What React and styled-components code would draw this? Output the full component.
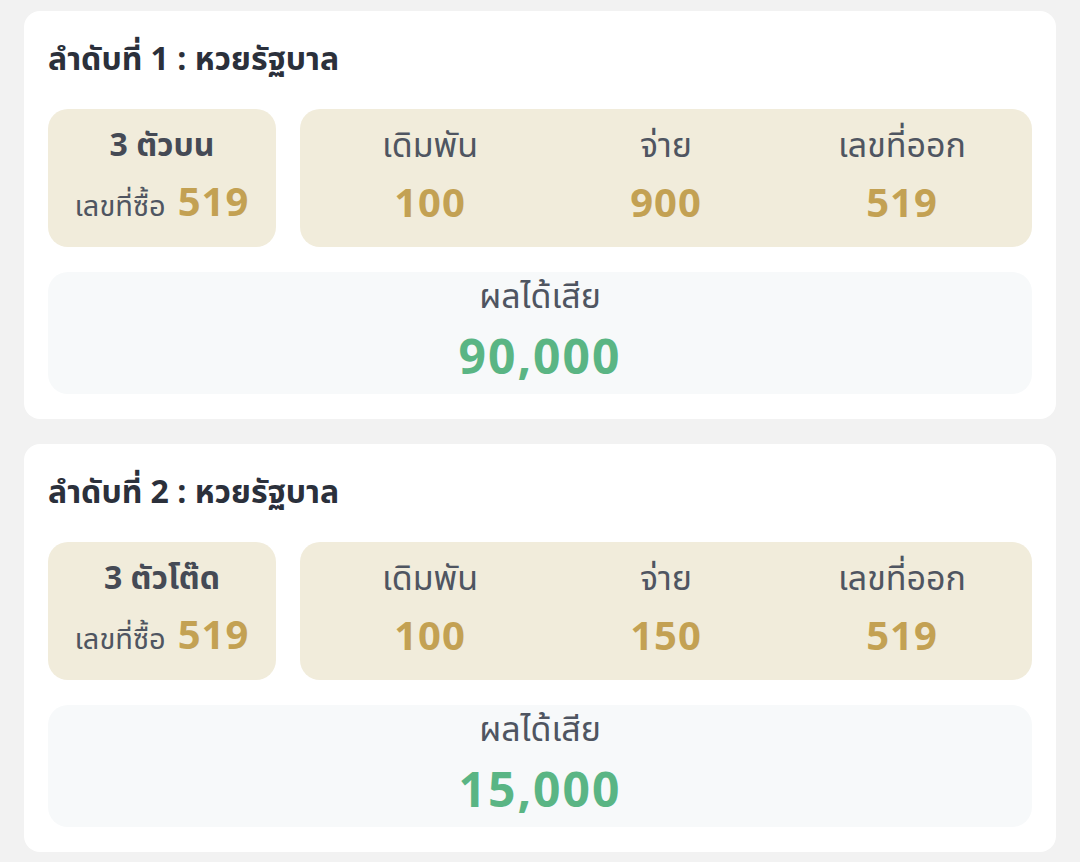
import React from 'react';
import styled, { createGlobalStyle } from 'styled-components';

const GlobalStyle = createGlobalStyle`
  body {
    margin: 0;
    background: #f2f2f2;
    font-family: "Noto Sans Thai", "Noto Sans", "Liberation Sans", sans-serif;
  }
`;

const Page = styled.div`
  display: flex;
  flex-direction: column;
  gap: 25px;
  padding: 11px 24px;
`;

const Card = styled.div`
  background: #ffffff;
  border-radius: 16px;
  padding: 24px 24px 25px;
  display: flex;
  flex-direction: column;
  gap: 24px;
`;

const Title = styled.h2`
  margin: 0;
  height: 50px;
  line-height: 50px;
  font-size: 32px;
  font-weight: 700;
  color: #2b303b;
`;

const Row = styled.div`
  display: flex;
  gap: 24px;
  height: 138px;
`;

const Box = styled.div`
  background: #f1ecdb;
  border-radius: 20px;
  display: flex;
  align-items: center;
`;

const TypeBox = styled(Box)`
  width: 228px;
  flex-direction: column;
  justify-content: center;
  gap: 14px;
`;

const TypeName = styled.div`
  font-size: 32px;
  font-weight: 700;
  color: #454a55;
  line-height: 40px;
`;

const Bought = styled.div`
  display: flex;
  align-items: baseline;
  gap: 12px;
  line-height: 48px;
`;

const Small = styled.span`
  font-size: 29px;
  color: #4f5561;
`;

const Gold = styled.span`
  font-size: 40px;
  font-weight: 700;
  line-height: 48px;
  letter-spacing: 1px;
  color: #c3a153;
`;

const StatBox = styled(Box)`
  flex: 1;
  padding: 0 12px;
  display: grid;
  grid-template-columns: repeat(3, 1fr);
`;

const Stat = styled.div`
  display: flex;
  flex-direction: column;
  align-items: center;
  gap: 14px;
`;

const Label = styled.div`
  font-size: 34px;
  color: #4f5561;
  line-height: 40px;
`;

const Result = styled.div`
  margin-top: 1px;
  background: #f7f9fa;
  border-radius: 20px;
  height: 122px;
  display: flex;
  flex-direction: column;
  align-items: center;
  justify-content: center;
  gap: 14px;
`;

const Green = styled.div`
  font-size: 48px;
  font-weight: 700;
  letter-spacing: 2px;
  color: #5ab584;
  line-height: 56px;
`;

const items = [
  { no: 1, name: 'หวยรัฐบาล', type: '3 ตัวบน', num: '519', bet: '100', pay: '900', out: '519', result: '90,000' },
  { no: 2, name: 'หวยรัฐบาล', type: '3 ตัวโต๊ด', num: '519', bet: '100', pay: '150', out: '519', result: '15,000' },
];

const App = () => {
  return (
    <>
      <GlobalStyle />
      <Page>
        {items.map((it) => (
          <Card key={it.no}>
            <Title>ลำดับที่ {it.no} : {it.name}</Title>
            <Row>
              <TypeBox>
                <TypeName>{it.type}</TypeName>
                <Bought>
                  <Small>เลขที่ซื้อ</Small>
                  <Gold>{it.num}</Gold>
                </Bought>
              </TypeBox>
              <StatBox>
                <Stat>
                  <Label>เดิมพัน</Label>
                  <Gold>{it.bet}</Gold>
                </Stat>
                <Stat>
                  <Label>จ่าย</Label>
                  <Gold>{it.pay}</Gold>
                </Stat>
                <Stat>
                  <Label>เลขที่ออก</Label>
                  <Gold>{it.out}</Gold>
                </Stat>
              </StatBox>
            </Row>
            <Result>
              <Label>ผลได้เสีย</Label>
              <Green>{it.result}</Green>
            </Result>
          </Card>
        ))}
      </Page>
    </>
  );
};

export default App;
